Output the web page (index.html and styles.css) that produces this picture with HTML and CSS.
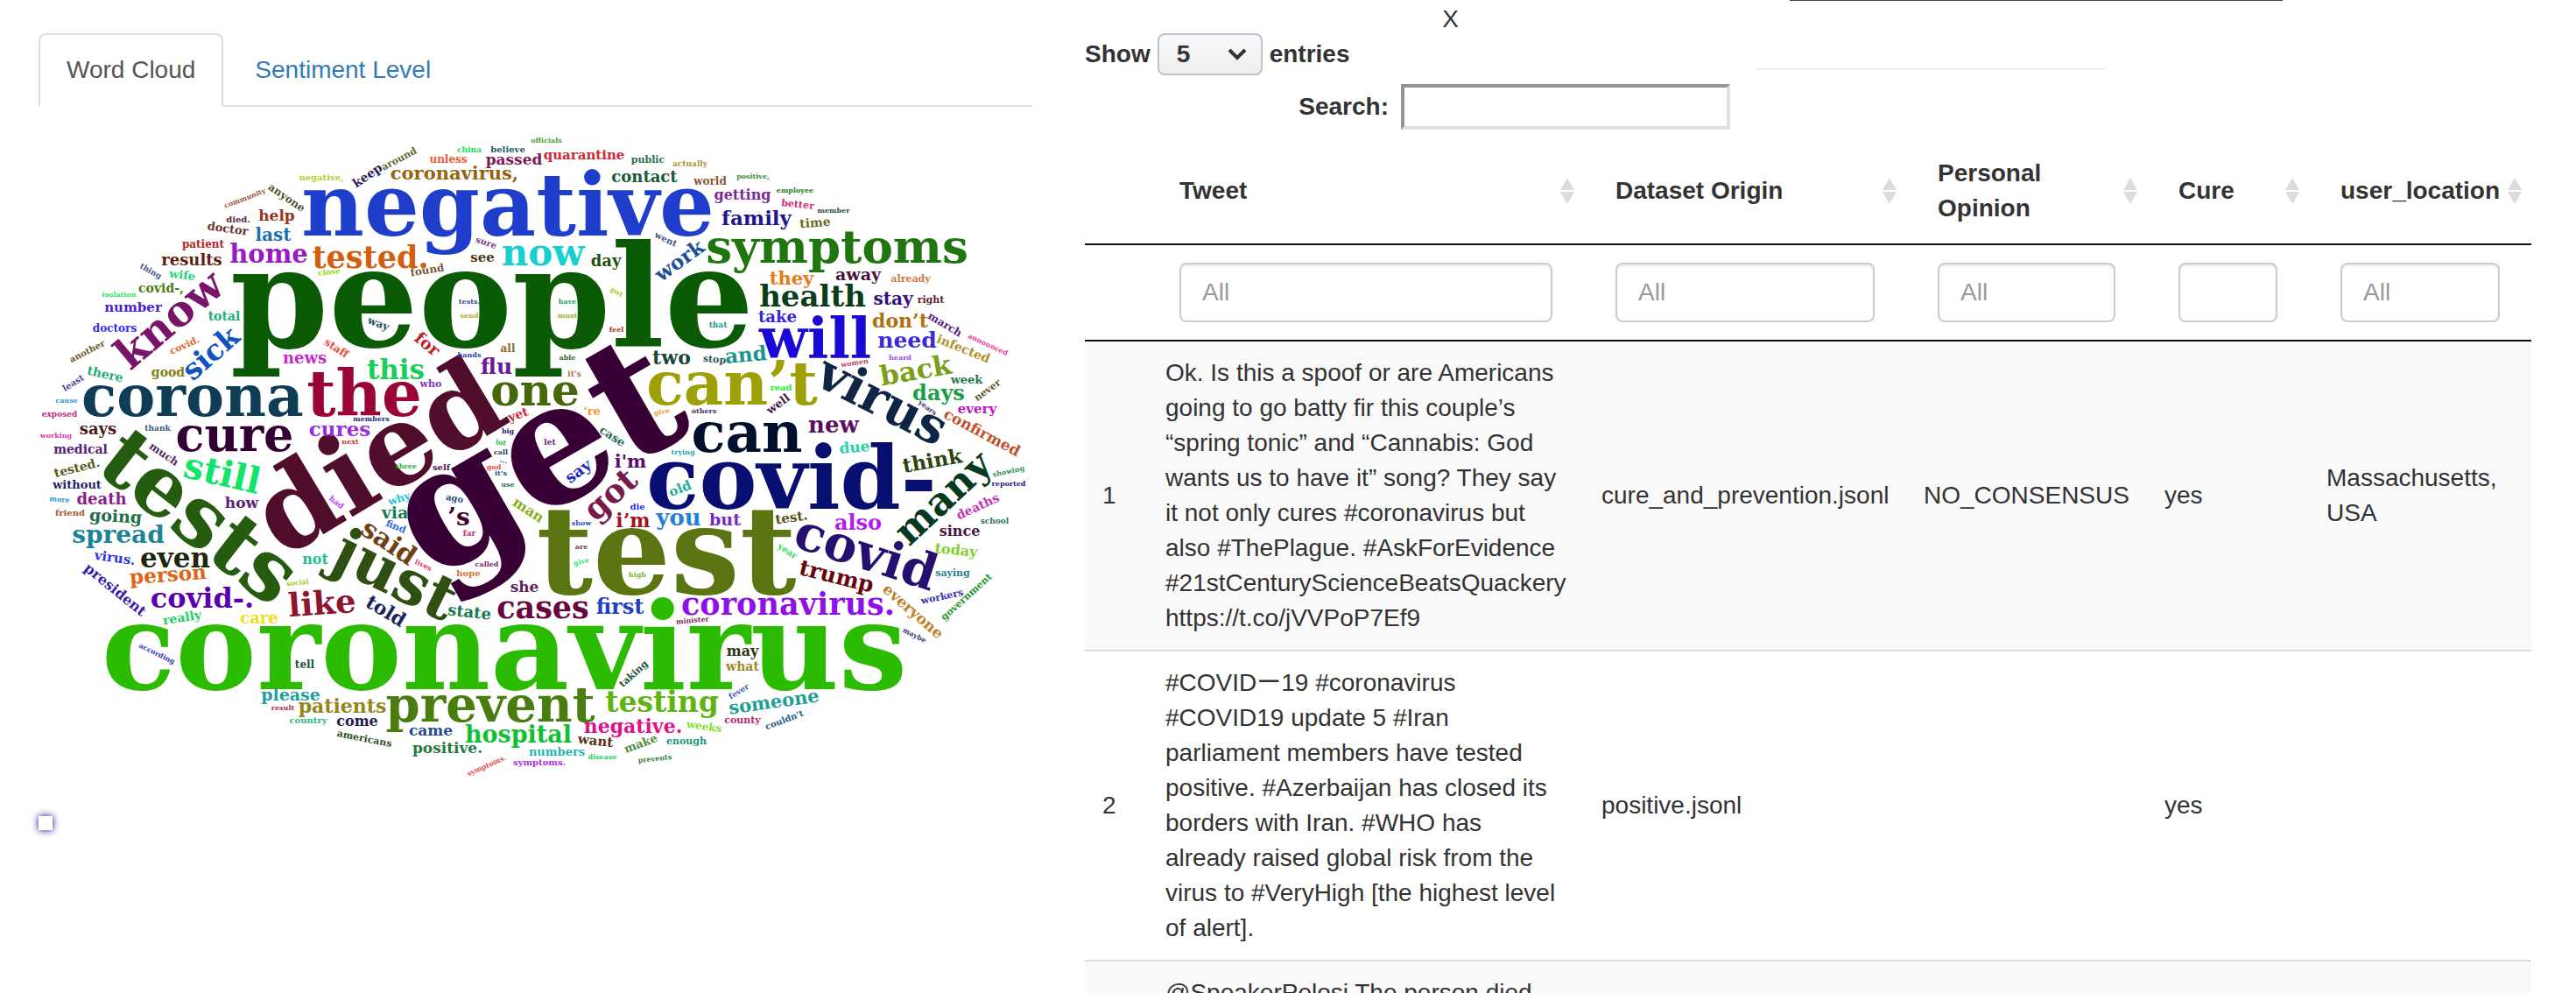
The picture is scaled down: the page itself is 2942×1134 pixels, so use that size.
FILE: index.html
```html
<!DOCTYPE html>
<html lang="en">
<head>
<meta charset="utf-8">
<title>Tweets</title>
<link rel="stylesheet" href="styles.css">
</head>
<body>
<main class="page">
<section class="cloud-panel">
<nav class="tabs">
<a class="tab tab-active" href="#cloud">Word Cloud</a>
<a class="tab" href="#sentiment">Sentiment Level</a>
</nav>
<svg class="cloud" id="cloud" viewBox="44 122 1134 810" role="img" aria-label="Word cloud of tweets">
<text x="562" y="354" font-size="161" fill="#0a5a06">people</text>
<text transform="translate(619 533) rotate(-30)" font-size="194" fill="#380035">get</text>
<text x="576" y="751" font-size="139" fill="#2bbb00">coronavirus</text>
<text x="761" y="641" font-size="140" fill="#5a7512">test</text>
<text transform="translate(437 531) rotate(-31)" font-size="127" fill="#500d2c">died</text>
<text x="580" y="243" font-size="99" fill="#1e3ecb">negative</text>
<text x="904" y="555" font-size="99" fill="#080f70">covid-</text>
<text transform="translate(224 596) rotate(38)" font-size="96" fill="#265c0f">tests</text>
<text x="416" y="456" font-size="72" fill="#9a0535">the</text>
<text transform="translate(449 662) rotate(26)" font-size="70" fill="#304f12">just</text>
<text x="836" y="444" font-size="70" fill="#9fa005">can’t</text>
<text x="220" y="458" font-size="66" fill="#0f3d55">corona</text>
<text x="931" y="391" font-size="64" fill="#1a08d5">will</text>
<text x="853" y="499" font-size="64" fill="#00102c">can</text>
<text transform="translate(1006 461) rotate(27)" font-size="57" fill="#0f2545">virus</text>
<text transform="translate(988 635) rotate(18)" font-size="57" fill="#251070">covid</text>
<text x="560" y="809" font-size="56" fill="#4a7d0f">prevent</text>
<text x="268" y="501" font-size="54" fill="#330033">cure</text>
<text x="956" y="286" font-size="53" fill="#1f760f">symptoms</text>
<text x="611" y="450" font-size="50" fill="#45690a">one</text>
<text transform="translate(196 368) rotate(-40)" font-size="49" fill="#7a1468">know</text>
<text transform="translate(1079 571) rotate(-43)" font-size="44" fill="#053a20">many</text>
<text x="620" y="292" font-size="42" fill="#15d0cf">now</text>
<text transform="translate(253 544) rotate(13)" font-size="41" fill="#10e56a">still</text>
<text transform="translate(699 567) rotate(-42)" font-size="37" fill="#7a1a4a">got</text>
<text transform="translate(368 692) rotate(-4)" font-size="37" fill="#8f1430">like</text>
<text x="423" y="296" font-size="35" fill="#d0600f">tested.</text>
<text x="620" y="696" font-size="35" fill="#6a0540">cases</text>
<text x="900" y="692" font-size="35" fill="#9010e8">coronavirus.</text>
<text x="928" y="341" font-size="34" fill="#0a3d18">health</text>
<text x="756" y="804" font-size="33" fill="#5fb510">testing</text>
<text transform="translate(242 405) rotate(-41)" font-size="33" fill="#0f55c0">sick</text>
<text x="231" y="685" font-size="32" fill="#5a00b0">covid-.</text>
<text x="452" y="424" font-size="31" fill="#18d058">this</text>
<text transform="translate(1046 425) rotate(-10)" font-size="31" fill="#7aa01a">back</text>
<text x="200" y="639" font-size="31" fill="#1f250a">even</text>
<text transform="translate(443 621) rotate(34)" font-size="30" fill="#704012">said</text>
<text x="307" y="292" font-size="29" fill="#9a1ac4">home</text>
<text x="135" y="612" font-size="28" fill="#1a8594">spread</text>
<text x="524" y="592" font-size="28" fill="#45002c">’s</text>
<text x="592" y="840" font-size="27" fill="#0fc035">hospital</text>
<text x="952" y="487" font-size="26" fill="#5a0f60">new</text>
<text x="775" y="593" font-size="26" fill="#2580d5">you</text>
<text x="567" y="420" font-size="25" fill="#6a1a94">flu</text>
<text x="1036" y="390" font-size="25" fill="#3a2ad8">need</text>
<text transform="translate(955 660) rotate(14)" font-size="25" fill="#6a0510">trump</text>
<text x="708" y="694" font-size="24" fill="#1f3fc5">first</text>
<text x="1072" y="450" font-size="24" fill="#14a045">days</text>
<text x="980" y="598" font-size="24" fill="#b51af0">also</text>
<text x="864" y="251" font-size="23" fill="#1f1590">family</text>
<text transform="translate(777 299) rotate(-36)" font-size="23" fill="#1f509a">work</text>
<text transform="translate(852 407) rotate(-5)" font-size="23" fill="#1a948c">and</text>
<text x="388" y="492" font-size="23" fill="#9a2ce0">cures</text>
<text transform="translate(192 658) rotate(-4)" font-size="23" fill="#dd6515">person</text>
<text transform="translate(1065 528) rotate(-10)" font-size="23" fill="#2c450f">think</text>
<text x="767" y="410" font-size="22" fill="#1a4538">two</text>
<text x="1028" y="368" font-size="22" fill="#b0700f">don’t</text>
<text x="723" y="596" font-size="22" fill="#a5101f">i’m</text>
<text transform="translate(440 699) rotate(31)" font-size="22" fill="#1a2560">told</text>
<text x="391" y="808" font-size="22" fill="#94841a">patients</text>
<text x="723" y="831" font-size="22" fill="#e0108a">negative.</text>
<text x="519" y="199" font-size="21" fill="#94650f">coronavirus,</text>
<text x="904" y="319" font-size="21" fill="#e67a15">they</text>
<text x="720" y="528" font-size="21" fill="#5a0f6a">i'm</text>
<text transform="translate(884 803) rotate(-8)" font-size="21" fill="#1fa094">someone</text>
<text x="312" y="269" font-size="20" fill="#1b6fb0">last</text>
<text x="1020" y="342" font-size="20" fill="#35107a">stay</text>
<text transform="translate(487 394) rotate(40)" font-size="19" fill="#bf1f24">for</text>
<text x="980" y="315" font-size="19" fill="#45103a">away</text>
<text transform="translate(132 591) rotate(3)" font-size="19" fill="#1f7045">going</text>
<text x="451" y="587" font-size="19" fill="#148050">via</text>
<text x="828" y="595" font-size="19" fill="#7a25c5">but</text>
<text x="332" y="795" font-size="19" fill="#1fa09a">please</text>
<text x="219" y="298" font-size="18" fill="#5e1f12">results</text>
<text x="348" y="410" font-size="18" fill="#c92bc9">news</text>
<text x="736" y="203" font-size="18" fill="#165a35">contact</text>
<text x="692" y="299" font-size="18" fill="#1f500f">day</text>
<text x="888" y="363" font-size="18" fill="#3525d5">take</text>
<text x="112" y="491" font-size="18" fill="#4a1a1a">says</text>
<text x="116" y="571" font-size="18" fill="#8a1f8a">death</text>
<text x="296" y="707" font-size="18" fill="#ecdf1a">care</text>
<text transform="translate(661 539) rotate(-36)" font-size="18" fill="#1f2cbf">say</text>
<text transform="translate(536 700) rotate(6)" font-size="18" fill="#1a7a4a">state</text>
<text x="316" y="247" font-size="17" fill="#963318">help</text>
<text x="587" y="183" font-size="17" fill="#7d1a55">passed</text>
<text x="276" y="575" font-size="17" fill="#5a207a">how</text>
<text x="599" y="671" font-size="17" fill="#5a2560">she</text>
<text transform="translate(1121 495) rotate(28)" font-size="17" fill="#c0502c">confirmed</text>
<text transform="translate(976 512) rotate(-5)" font-size="17" fill="#1fd5a5">due</text>
<text transform="translate(1042 699) rotate(41)" font-size="17" fill="#c08025">everyone</text>
<text x="492" y="835" font-size="17" fill="#1f4a94">came</text>
<text x="511" y="855" font-size="17" fill="#1f7a40">positive.</text>
<text x="848" y="223" font-size="16" fill="#7a2c94">getting</text>
<text transform="translate(131 674) rotate(39)" font-size="16" fill="#3a20a8">president</text>
<text x="360" y="639" font-size="16" fill="#1fbf94">not</text>
<text transform="translate(603 583) rotate(33)" font-size="16" fill="#84b01a">man</text>
<text x="1096" y="607" font-size="16" fill="#4a1540">since</text>
<text transform="translate(1092 629) rotate(6)" font-size="16" fill="#84cf2c">today</text>
<text x="408" y="824" font-size="16" fill="#251a50">come</text>
<text x="848" y="744" font-size="16" fill="#2c3510">may</text>
<text x="152" y="352" font-size="15" fill="#4a1ed0">number</text>
<text x="667" y="178" font-size="15" fill="#c92a35">quarantine</text>
<text x="551" y="295" font-size="15" fill="#4a3a18">see</text>
<text transform="translate(131 638) rotate(8)" font-size="15" fill="#2c35e0">virus.</text>
<text transform="translate(777 559) rotate(-22)" font-size="15" fill="#1fb09a">old</text>
<text x="1116" y="468" font-size="15" fill="#b51ac0">every</text>
<text transform="translate(904 592) rotate(-8)" font-size="15" fill="#5a5018">test.</text>
<text transform="translate(680 847) rotate(6)" font-size="15" fill="#5a2c12">want</text>
<text x="184" y="330" font-size="14" fill="#4c7d10">covid-,</text>
<text x="256" y="362" font-size="14" fill="#1fae78">total</text>
<text transform="translate(120 428) rotate(13)" font-size="14" fill="#1fae7c">there</text>
<text x="192" y="426" font-size="14" fill="#7d7d10">good</text>
<text transform="translate(420 201) rotate(-34)" font-size="14" fill="#2c1a58">keep</text>
<text transform="translate(931 255) rotate(-4)" font-size="14" fill="#6b6b25">time</text>
<text transform="translate(1100 399) rotate(22)" font-size="14" fill="#b0902c">infected</text>
<text x="92" y="514" font-size="14" fill="#55207a">medical</text>
<text transform="translate(88 535) rotate(-14)" font-size="14" fill="#5a5a20">tested.</text>
<text transform="translate(208 706) rotate(-9)" font-size="14" fill="#1fcf60">really</text>
<text transform="translate(592 474) rotate(-20)" font-size="14" fill="#d02c3a">yet</text>
<text transform="translate(1117 579) rotate(-25)" font-size="14" fill="#c035b5">deaths</text>
<text x="848" y="762" font-size="14" fill="#a5852c">what</text>
<text transform="translate(260 262) rotate(8)" font-size="13" fill="#6b3535">doctor</text>
<text transform="translate(208 315) rotate(7)" font-size="13" fill="#1fd27c">wife</text>
<text x="1104" y="434" font-size="13" fill="#1f7a4a">week</text>
<text x="88" y="554" font-size="13" fill="#1f1f6a">without</text>
<text x="676" y="470" font-size="13" fill="#f09a35">‘re</text>
<text transform="translate(699 499) rotate(33)" font-size="13" fill="#1f6a58">case</text>
<text transform="translate(889 462) rotate(-36)" font-size="13" fill="#45154a">well</text>
<text x="636" y="859" font-size="13" fill="#1fb5b5">numbers</text>
<text transform="translate(732 850) rotate(-20)" font-size="13" fill="#4a8a3a">make</text>
<text transform="translate(327 226) rotate(34)" font-size="12" fill="#4a5520">anyone</text>
<text x="232" y="279" font-size="12" fill="#b32525">patient</text>
<text x="131" y="375" font-size="12" fill="#3a2af0">doctors</text>
<text transform="translate(384 398) rotate(33)" font-size="12" fill="#ef4a3f">staff</text>
<text x="512" y="182" font-size="12" fill="#ef5a35">unless</text>
<text x="811" y="207" font-size="12" fill="#8b5538">world</text>
<text transform="translate(488 309) rotate(-9)" font-size="12" fill="#7a5a35">found</text>
<text transform="translate(432 370) rotate(20)" font-size="12" fill="#1f5058">way</text>
<text x="580" y="398" font-size="12" fill="#8a6a30">all</text>
<text transform="translate(1079 371) rotate(31)" font-size="12" fill="#55207a">march</text>
<text transform="translate(187 519) rotate(34)" font-size="12" fill="#552560">much</text>
<text transform="translate(456 570) rotate(-18)" font-size="12" fill="#1fbfdf">why</text>
<text x="348" y="759" font-size="12" fill="#205038">tell</text>
<text transform="translate(804 830) rotate(8)" font-size="12" fill="#84e02c">weeks</text>
<text transform="translate(211 395) rotate(-24)" font-size="11" fill="#e06a2c">covid.</text>
<text transform="translate(456 182) rotate(-28)" font-size="11" fill="#5a6b2c">around</text>
<text x="740" y="183" font-size="11" fill="#2c7050">public</text>
<text transform="translate(816 411) rotate(5)" font-size="11" fill="#2c5560">stop</text>
<text transform="translate(911 234) rotate(6)" font-size="11" fill="#d02c80">better</text>
<text x="1040" y="319" font-size="11" fill="#cf7a45">already</text>
<text x="1063" y="343" font-size="11" fill="#5a2535">right</text>
<text x="492" y="439" font-size="11" fill="#7a3ab0">who</text>
<text transform="translate(452 602) rotate(22)" font-size="11" fill="#2c6ae0">find</text>
<text transform="translate(1128 446) rotate(-36)" font-size="11" fill="#5a5a30">never</text>
<text x="1088" y="655" font-size="11" fill="#2c8090">saying</text>
<text transform="translate(1076 682) rotate(-12)" font-size="11" fill="#3530a5">workers</text>
<text transform="translate(1104 682) rotate(-42)" font-size="11" fill="#1f942c">government</text>
<text transform="translate(416 844) rotate(11)" font-size="11" fill="#305025">americans</text>
<text transform="translate(724 770) rotate(-42)" font-size="11" fill="#205035">taking</text>
<text x="848" y="823" font-size="11" fill="#b02c7a">county</text>
<text x="784" y="847" font-size="11" fill="#1a9480">enough</text>
<text x="367" y="203" font-size="10" fill="#b5cf2c">negative,</text>
<text x="272" y="251" font-size="10" fill="#5a2548">died.</text>
<text transform="translate(100 402) rotate(-27)" font-size="10" fill="#6b5a28">another</text>
<text x="580" y="171" font-size="10" fill="#1a5a68">believe</text>
<text transform="translate(555 278) rotate(20)" font-size="10" fill="#7d3a88">sure</text>
<text transform="translate(760 274) rotate(25)" font-size="10" fill="#35587d">went</text>
<text transform="translate(84 438) rotate(-32)" font-size="10" fill="#4a4a94">least</text>
<text x="80" y="586" font-size="10" fill="#9a6035">friend</text>
<text x="504" y="534" font-size="10" fill="#45204a">self</text>
<text transform="translate(519 570) rotate(10)" font-size="10" fill="#1f4a7a">ago</text>
<text x="728" y="579" font-size="10" fill="#2c2cf0">die</text>
<text x="535" y="655" font-size="10" fill="#cf7030">hope</text>
<text x="892" y="443" font-size="10" fill="#1ff02c">read</text>
<text transform="translate(899 630) rotate(33)" font-size="10" fill="#2ce058">year</text>
<text x="352" y="823" font-size="10" fill="#1fb58a">country</text>
<text x="616" y="871" font-size="10" fill="#b02ce0">symptoms.</text>
<text transform="translate(896 823) rotate(-21)" font-size="10" fill="#20608a">couldn't</text>
<text transform="translate(376 311) rotate(-6)" font-size="9" fill="#8fdc10">close</text>
<text transform="translate(172 310) rotate(29)" font-size="9" fill="#40588a">thing</text>
<text x="536" y="171" font-size="9" fill="#1fdc60">china</text>
<text x="788" y="187" font-size="9" fill="#b0943a">actually</text>
<text x="656" y="427" font-size="9" fill="#c06a3a">it's</text>
<text x="820" y="371" font-size="9" fill="#1f9a8a">that</text>
<text x="68" y="473" font-size="9" fill="#c02c80">exposed</text>
<text x="180" y="489" font-size="9" fill="#35607a">thank</text>
<text transform="translate(384 574) rotate(38)" font-size="9" fill="#c040f0">had</text>
<text x="628" y="505" font-size="9" fill="#5a2c7a">let</text>
<text transform="translate(575 526) rotate(12)" font-size="9" fill="#2c6a9a">...</text>
<text x="536" y="609" font-size="9" fill="#c02c7a">far</text>
<text x="1136" y="595" font-size="9" fill="#2c7060">school</text>
<text transform="translate(844 790) rotate(-32)" font-size="9" fill="#3a5ab0">fever</text>
<text transform="translate(280 227) rotate(-21)" font-size="8" fill="#9b5a33">community</text>
<text x="136" y="337" font-size="8" fill="#1fe567">isolation</text>
<text x="624" y="161" font-size="8" fill="#4fa02c">officials</text>
<text x="536" y="345" font-size="8" fill="#2c4f98">tests.</text>
<text x="536" y="361" font-size="8" fill="#c0a81f">send</text>
<text x="648" y="345" font-size="8" fill="#1fa565">have</text>
<text x="648" y="361" font-size="8" fill="#a0b030">must</text>
<text transform="translate(704 334) rotate(28)" font-size="8" fill="#b5c535">put</text>
<text x="704" y="377" font-size="8" fill="#b81f1f">feel</text>
<text x="536" y="406" font-size="8" fill="#2c3fb0">hands</text>
<text x="648" y="409" font-size="8" fill="#2c6a2c">able</text>
<text x="860" y="202" font-size="8" fill="#3f8a3a">positive,</text>
<text x="908" y="218" font-size="8" fill="#2c7a2c">employee</text>
<text x="952" y="241" font-size="8" fill="#1f5045">member</text>
<text transform="translate(1128 394) rotate(25)" font-size="8" fill="#ef3a9a">announced</text>
<text x="1028" y="409" font-size="8" fill="#9a45e8">heard</text>
<text transform="translate(976 415) rotate(-9)" font-size="8" fill="#b0456a">women</text>
<text x="76" y="458" font-size="8" fill="#2c9ac9">cause</text>
<text x="64" y="498" font-size="8" fill="#d83ab5">working</text>
<text x="424" y="479" font-size="8" fill="#25258a">members</text>
<text x="400" y="505" font-size="8" fill="#d82c2c">next</text>
<text transform="translate(68 571) rotate(5)" font-size="8" fill="#2c94c9">more</text>
<text transform="translate(340 666) rotate(-6)" font-size="8" fill="#a0d02c">social</text>
<text transform="translate(756 471) rotate(-10)" font-size="8" fill="#f0a035">give</text>
<text x="804" y="470" font-size="8" fill="#45306a">others</text>
<text x="580" y="493" font-size="8" fill="#25206a">big</text>
<text transform="translate(572 506) rotate(8)" font-size="8" fill="#2cc045">lot</text>
<text x="572" y="517" font-size="8" fill="#25406a">call</text>
<text x="564" y="534" font-size="8" fill="#e84545">god</text>
<text x="572" y="541" font-size="8" fill="#1a5a5a">it’s</text>
<text x="580" y="554" font-size="8" fill="#2c7058">use</text>
<text x="464" y="533" font-size="8" fill="#1fb52c">three</text>
<text x="780" y="517" font-size="8" fill="#1fa5b0">trying</text>
<text x="664" y="598" font-size="8" fill="#2c4fb5">show</text>
<text x="664" y="625" font-size="8" fill="#6a3a50">are</text>
<text transform="translate(664 642) rotate(-14)" font-size="8" fill="#3ae065">give</text>
<text x="728" y="657" font-size="8" fill="#84b52c">high</text>
<text transform="translate(483 646) rotate(26)" font-size="8" fill="#e8356a">lives</text>
<text x="556" y="645" font-size="8" fill="#7a2c7a">called</text>
<text transform="translate(791 709) rotate(-5)" font-size="8" fill="#7a2c50">minister</text>
<text transform="translate(1059 466) rotate(36)" font-size="8" fill="#3a306a">years</text>
<text transform="translate(1152 539) rotate(-12)" font-size="8" fill="#3a8a55">showing</text>
<text x="1152" y="553" font-size="8" fill="#25208a">reported</text>
<text transform="translate(179 747) rotate(26)" font-size="8" fill="#3a35c9">according</text>
<text x="323" y="809" font-size="8" fill="#b02c50">result</text>
<text transform="translate(556 875) rotate(-24)" font-size="8" fill="#e05050">symptoms.</text>
<text transform="translate(1044 726) rotate(27)" font-size="8" fill="#35407d">maybe</text>
<text x="688" y="865" font-size="8" fill="#1fd55a">disease</text>
<text transform="translate(748 867) rotate(-6)" font-size="8" fill="#3a7a3a">prevents</text>
</svg>
<div class="cloud-label"></div>
</section>

<section class="table-panel">
<header class="toolbar">
<div class="controls">
<div class="controls-top">
<label class="length" for="length">Show
<span class="select-wrap">
<select id="length"><option>5</option><option>10</option><option>25</option></select>
<svg class="chevron" viewBox="0 0 22 14" aria-hidden="true"><path d="M2 2l9 9 9-9"/></svg>
</span>
entries</label>
<button class="close" type="button">X</button>
</div>
<label class="search">Search: <input type="search"></label>
</div>
<div class="rules">
<hr class="rule-dark">
<hr class="rule-light">
</div>
</header>
<table class="tweets">
<colgroup><col class="col-num"><col><col class="col-origin"><col class="col-opinion"><col class="col-cure"><col class="col-location"></colgroup>
<thead>
<tr class="titles">
<th></th>
<th>Tweet<svg class="sort" viewBox="0 0 16 30" aria-hidden="true"><path d="M8 0l8 14H0zM8 30l8-14H0z"/></svg></th>
<th>Dataset Origin<svg class="sort" viewBox="0 0 16 30" aria-hidden="true"><path d="M8 0l8 14H0zM8 30l8-14H0z"/></svg></th>
<th>Personal Opinion<svg class="sort" viewBox="0 0 16 30" aria-hidden="true"><path d="M8 0l8 14H0zM8 30l8-14H0z"/></svg></th>
<th>Cure<svg class="sort" viewBox="0 0 16 30" aria-hidden="true"><path d="M8 0l8 14H0zM8 30l8-14H0z"/></svg></th>
<th>user_location<svg class="sort" viewBox="0 0 16 30" aria-hidden="true"><path d="M8 0l8 14H0zM8 30l8-14H0z"/></svg></th>
</tr>
<tr class="filters">
<td></td>
<td><input type="text" placeholder="All" aria-label="Filter tweet"></td>
<td><input type="text" placeholder="All" aria-label="Filter dataset origin"></td>
<td><input type="text" placeholder="All" aria-label="Filter personal opinion"></td>
<td><input type="text" aria-label="Filter cure"></td>
<td><input type="text" placeholder="All" aria-label="Filter user location"></td>
</tr>
</thead>
<tbody>
<tr>
<td>1</td>
<td>Ok. Is this a spoof or are Americans going to go batty fir this couple’s “spring tonic” and “Cannabis: God wants us to have it” song? They say it not only cures #coronavirus but also #ThePlague. #AskForEvidence #21stCenturyScienceBeatsQuackery https://t.co/jVVPoP7Ef9</td>
<td>cure_and_prevention.jsonl</td>
<td>NO_CONSENSUS</td>
<td>yes</td>
<td>Massachusetts, USA</td>
</tr>
<tr>
<td>2</td>
<td>#COVIDー19 #coronavirus #COVID19 update 5 #Iran parliament members have tested positive. #Azerbaijan has closed its borders with Iran. #WHO has already raised global risk from the virus to #VeryHigh [the highest level of alert].</td>
<td>positive.jsonl</td>
<td></td>
<td>yes</td>
<td></td>
</tr>
<tr class="row-cut">
<td>3</td>
<td>@SpeakerPelosi The person died</td>
<td></td>
<td></td>
<td></td>
<td></td>
</tr>
</tbody>
</table>
</section>
</main>
</body>
</html>
```
FILE: styles.css
```css
* { box-sizing: border-box; }

body {
  margin: 0;
  background: #fff;
  color: #333;
  font: 28px/40px "Liberation Sans", Arial, "Noto Sans CJK JP", sans-serif;
}

.page {
  display: grid;
  grid-template-columns: minmax(0, 1134fr) minmax(0, 1652fr);
  gap: 61px;
  height: 100vh;
  padding: 0 51px 0 44px;
  overflow: hidden;
}

/* Tabs and word cloud */
.cloud-panel { padding-top: 38px; }

.tabs {
  display: flex;
  gap: 4px;
  border-bottom: 2px solid #ddd;
}

.tab {
  margin-bottom: -2px;
  padding: 20px 30px;
  border: 2px solid transparent;
  border-radius: 8px 8px 0 0;
  color: #337ab7;
  text-decoration: none;
}

.tab-active {
  border-color: #ddd #ddd #fff;
  background: #fff;
  color: #555;
}

.cloud {
  display: block;
  width: 100%;
  overflow: visible;
  font-family: "DejaVu Serif", serif;
  font-weight: bold;
}

.cloud text {
  text-anchor: middle;
  dominant-baseline: middle;
}

.cloud-label {
  width: 16px;
  height: 16px;
  background: #fff;
  box-shadow: 0 0 8px #008;
}

/* Table controls */
.toolbar {
  display: flex;
  gap: 30px;
  padding-bottom: 10px;
}

.controls {
  display: flex;
  flex-direction: column;
  gap: 10px;
  width: 737px;
  padding-top: 2px;
}

.controls-top {
  display: flex;
  justify-content: space-between;
  align-items: flex-start;
  padding-right: 310px;
}

.length,
.search {
  display: flex;
  align-items: center;
  gap: 8px;
  font-weight: bold;
}

.length { margin-top: 36px; }

.search {
  align-self: flex-end;
  gap: 14px;
}

.select-wrap {
  display: grid;
  align-items: center;
}

.select-wrap select {
  grid-area: 1 / 1;
  width: 120px;
  height: 48px;
  padding: 0 20px;
  border: 2px solid #bcc3cb;
  border-radius: 8px;
  background: linear-gradient(#f8f9fa, #eceef0);
  color: #333;
  font: inherit;
  appearance: none;
}

.chevron {
  grid-area: 1 / 1;
  justify-self: end;
  width: 22px;
  height: 14px;
  margin-right: 18px;
  fill: none;
  stroke: #333;
  stroke-width: 4;
  pointer-events: none;
}

.search input {
  width: 376px;
  height: 52px;
  padding: 2px 4px;
  border: 4px solid;
  border-color: #949494 #e0e0e0 #e0e0e0 #949494;
  background: #fff;
  font: inherit;
  appearance: none;
}

.close {
  padding: 0;
  border: 0;
  background: none;
  color: #333;
  font: inherit;
}

.rules { flex: 1; }

.rule-dark,
.rule-light {
  border: 0;
}

.rule-dark {
  width: 563px;
  height: 1px;
  margin: 0 0 77px 38px;
  background: #444;
}

.rule-light {
  width: 399px;
  height: 2px;
  margin: 0;
  background: #eee;
}

/* Tweets table */
.tweets {
  width: 100%;
  table-layout: fixed;
  border-collapse: separate;
  border-spacing: 0;
}

.col-num { width: 72px; }
.col-origin { width: 368px; }
.col-opinion { width: 275px; }
.col-cure { width: 185px; }
.col-location { width: 254px; }

.tweets th {
  position: relative;
  padding: 20px 36px;
  border-bottom: 2px solid #111;
  text-align: left;
}

.sort {
  position: absolute;
  top: 45px;
  right: 11px;
  width: 16px;
  height: 30px;
  fill: #dcdcdc;
}

.filters td {
  padding: 20px 36px;
  border-bottom: 2px solid #111;
}

.filters input {
  display: block;
  width: 100%;
  height: 68px;
  padding: 12px 24px;
  border: 2px solid #ccc;
  border-radius: 8px;
  background: #fff;
  box-shadow: inset 0 2px 2px rgba(0, 0, 0, 0.08);
  color: #555;
  font: inherit;
}

.filters input::placeholder {
  color: #999;
  opacity: 1;
}

.tweets tbody td {
  padding: 16px 20px;
  border-top: 2px solid #ddd;
  vertical-align: middle;
}

.tweets tbody tr:first-child td { border-top: 0; }
.tweets tbody tr:nth-child(odd) td { background: #f9f9f9; }

.tweets .row-cut { height: 354px; }
.tweets .row-cut td:nth-child(2) { vertical-align: top; }
```
